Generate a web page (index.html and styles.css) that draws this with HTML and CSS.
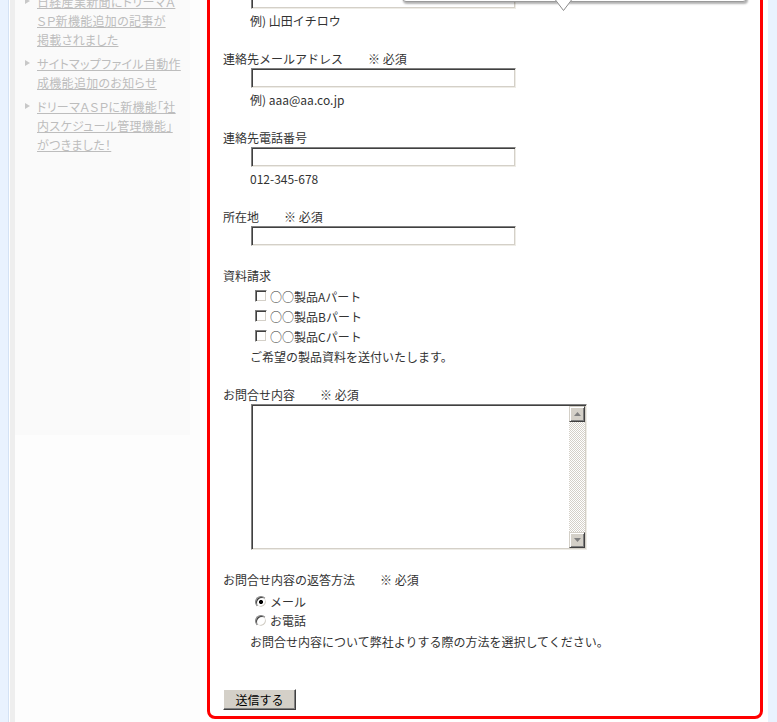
FILE: index.html
```html
<!DOCTYPE html>
<html lang="ja">
<head>
    <meta charset="UTF-8">
    <title>お問合せ</title>
    <link rel="stylesheet" href="styles.css">
</head>
<body>
    <div class="wrap">
        <div class="side">
            <ul class="news">
                <li><a href="#">日経産業新聞にドリーマＡ<br>ＳＰ新機能追加の記事が<br>掲載されました</a></li>
                <li><a href="#">サイトマップファイル自動作<br>成機能追加のお知らせ</a></li>
                <li><a href="#">ドリーマＡＳＰに新機能「社<br>内スケジュール管理機能」<br>がつきました！</a></li>
            </ul>
        </div>

        <div class="main">
            <div class="balloon">
                <svg width="17" height="12" viewBox="0 0 17 12">
                    <path d="M0 0 H17 L8.5 11 Z" fill="#fff"/>
                    <path d="M0.5 0 L8.5 10.5 L16.5 0" fill="none" stroke="#8a8a8a"/>
                </svg>
            </div>

            <form class="form-box">
                <div class="field">
                    <div class="label">お名前<span class="req">※ 必須</span></div>
                    <div class="control"><input type="text" class="text"></div>
                    <div class="note">例) 山田イチロウ</div>
                </div>

                <div class="field">
                    <div class="label">連絡先メールアドレス<span class="req">※ 必須</span></div>
                    <div class="control"><input type="text" class="text"></div>
                    <div class="note">例) aaa@aa.co.jp</div>
                </div>

                <div class="field">
                    <div class="label">連絡先電話番号</div>
                    <div class="control"><input type="text" class="text"></div>
                    <div class="note">012-345-678</div>
                </div>

                <div class="field">
                    <div class="label">所在地<span class="req">※ 必須</span></div>
                    <div class="control"><input type="text" class="text"></div>
                </div>

                <div class="field">
                    <div class="label">資料請求</div>
                    <div class="choices">
                        <label class="choice"><input type="checkbox" class="check">○○製品Aパート</label>
                        <label class="choice"><input type="checkbox" class="check">○○製品Bパート</label>
                        <label class="choice"><input type="checkbox" class="check">○○製品Cパート</label>
                    </div>
                    <div class="note note-tight">ご希望の製品資料を送付いたします。</div>
                </div>

                <div class="field">
                    <div class="label">お問合せ内容<span class="req">※ 必須</span></div>
                    <div class="control">
                        <div class="textarea">
                            <textarea></textarea>
                            <div class="scrollbar">
                                <span class="sb-btn">
                                    <svg width="7" height="4" viewBox="0 0 7 4"><path d="M3.5 0 L7 4 H0 Z" fill="#808080"/></svg>
                                </span>
                                <span class="sb-track"></span>
                                <span class="sb-btn">
                                    <svg width="7" height="4" viewBox="0 0 7 4"><path d="M0 0 H7 L3.5 4 Z" fill="#808080"/></svg>
                                </span>
                            </div>
                        </div>
                    </div>
                </div>

                <div class="field">
                    <div class="label">お問合せ内容の返答方法<span class="req">※ 必須</span></div>
                    <div class="choices radios">
                        <label class="choice"><input type="radio" name="reply" class="radio" checked>メール</label>
                        <label class="choice"><input type="radio" name="reply" class="radio">お電話</label>
                    </div>
                    <div class="note note-radio">お問合せ内容について弊社よりする際の方法を選択してください。</div>
                </div>

                <div class="submit">
                    <button type="submit">送信する</button>
                </div>
            </form>
            <div class="dots"></div>
        </div>
    </div>
</body>
</html>
```

FILE: styles.css
```css
* {
    margin: 0;
    padding: 0;
    box-sizing: border-box;
}

body {
    background-color: #e9f2fe;
    font-family: "Noto Sans CJK JP", "Liberation Sans", sans-serif;
    font-size: 12px;
    color: #333;
    height: 722px;
    overflow: hidden;
}

.wrap {
    position: relative;
    display: flex;
    margin-left: 8px;
    width: 760px;
    min-height: 722px;
    background-color: #fff;
    border-left: 1px solid #d4e2f4;
}

/* left column */

.side {
    width: 190px;
    margin-left: 1px;
    border-left: 5px solid #eeeeee;
    background-color: #fdfdfd;
}

.news {
    list-style: none;
    width: 175px;
    height: 443px;
    margin-top: -8px;
    background-color: #fafafa;
}

.news li {
    position: relative;
    padding-left: 22px;
    margin-bottom: 5px;
    line-height: 19px;
    white-space: nowrap;
    font-feature-settings: "palt";
}

.news li::before {
    content: "";
    position: absolute;
    left: 10px;
    top: 6px;
    border-left: 5px solid #c8c8c8;
    border-top: 3.5px solid transparent;
    border-bottom: 3.5px solid transparent;
}

.news a {
    color: #bdbdbd;
    text-decoration: underline;
    letter-spacing: 0.3px;
}

/* form */

.main {
    width: 556px;
    margin-left: 7px;
}

.balloon {
    position: absolute;
    z-index: 2;
    top: -38px;
    left: 393px;
    width: 345px;
    height: 40px;
    background-color: #fff;
    border: 1px solid #9a9a9a;
    border-radius: 0 0 4px 4px;
    box-shadow: 1px 2px 2px rgba(0, 0, 0, 0.3);
}

.balloon svg {
    position: absolute;
    left: 152px;
    top: 37px;
}

.form-box {
    margin-top: -52px;
    padding: 21px 13px 6px;
    border: 3px solid #ff0000;
    border-radius: 0 0 8px 8px;
}

.field {
    margin-bottom: 22px;
}

.label {
    line-height: 16px;
}

.req {
    margin-left: 25px;
}

.control {
    margin-top: 1px;
    padding-left: 28px;
}

.note {
    margin-top: 4px;
    padding-left: 27px;
    line-height: 16px;
}

.note-tight {
    margin-top: 3px;
}

.note-radio {
    margin-top: 4px;
}

input.text {
    display: block;
    width: 265px;
    height: 20px;
    border: 1px solid;
    border-color: #808080 #eeece6 #eeece6 #808080;
    box-shadow: inset 1px 1px 0 #404040, inset -1px -1px 0 #d4d0c8;
    background-color: #fff;
    outline: none;
}

.choices {
    margin-top: 2px;
    padding-left: 32px;
}

.radios {
    margin-top: 4px;
}

.choice {
    display: flex;
    align-items: center;
    height: 20px;
}

.radios .choice {
    height: 19px;
}

.check,
.radio {
    appearance: none;
    width: 12px;
    height: 12px;
    margin-right: 3px;
    border: 1px solid;
    border-color: #808080 #fff #fff #808080;
    box-shadow: inset 1px 1px 0 #404040, inset -1px -1px 0 #d4d0c8;
    background-color: #fff;
}

.radio {
    border-radius: 50%;
}

.radio:checked {
    background: radial-gradient(circle, #000 0 1.8px, #fff 2.3px);
}

.textarea {
    display: flex;
    width: 336px;
    height: 146px;
    border: 1px solid;
    border-color: #808080 #eeece6 #eeece6 #808080;
    box-shadow: inset 1px 1px 0 #404040, inset -1px -1px 0 #d4d0c8;
    background-color: #fff;
    padding: 1px;
}

.textarea textarea {
    flex: 1;
    border: none;
    resize: none;
    outline: none;
    background: transparent;
}

.scrollbar {
    display: flex;
    flex-direction: column;
    width: 16px;
}

.sb-btn {
    display: flex;
    align-items: center;
    justify-content: center;
    height: 16px;
    background-color: #d4d0c8;
    border: 1px solid;
    border-color: #d4d0c8 #404040 #404040 #d4d0c8;
    box-shadow: inset 1px 1px 0 #fff, inset -1px -1px 0 #808080;
}

.sb-track {
    flex: 1;
    background: repeating-conic-gradient(#d4d0c8 0 25%, #fff 0 50%) 0 0 / 2px 2px;
}

.submit {
    margin-top: 39px;
}

.submit button {
    width: 73px;
    height: 21px;
    font-family: inherit;
    font-size: 12px;
    color: #000;
    background-color: #d4d0c8;
    border: 1px solid;
    border-color: #fff #404040 #404040 #fff;
    box-shadow: inset -1px -1px 0 #808080;
}

.dots {
    margin: 3px 0 0 16px;
    border-top: 1px dotted #d8d8d8;
}
```
